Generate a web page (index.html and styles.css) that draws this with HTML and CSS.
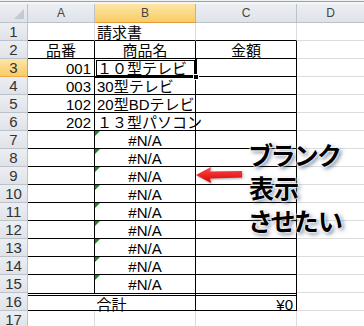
FILE: index.html
```html
<!DOCTYPE html>
<html lang="ja">
<head>
<meta charset="utf-8">
<title>請求書</title>
<link rel="stylesheet" href="styles.css">
</head>
<body>
<div class="band"></div>
<div class="sheet">
  <!-- column headers -->
  <div class="corner"></div>
  <div class="ch">A</div>
  <div class="ch sel">B</div>
  <div class="ch">C</div>
  <div class="ch">D</div>

  <!-- 1 -->
  <div class="rh">1</div>
  <div class="c top"></div>
  <div class="c top">請求書</div>
  <div class="c top"></div>
  <div class="c"></div>

  <!-- 2 -->
  <div class="rh">2</div>
  <div class="c t m">品番</div>
  <div class="c t m">商品名</div>
  <div class="c t m">金額</div>
  <div class="c"></div>

  <!-- 3 -->
  <div class="rh sel">3</div>
  <div class="c t r">001</div>
  <div class="c t active">１０型テレビ<span class="handle"></span></div>
  <div class="c t"></div>
  <div class="c"></div>

  <!-- 4 -->
  <div class="rh">4</div>
  <div class="c t r">003</div>
  <div class="c t">30型テレビ</div>
  <div class="c t"></div>
  <div class="c"></div>

  <!-- 5 -->
  <div class="rh">5</div>
  <div class="c t r">102</div>
  <div class="c t">20型BDテレビ</div>
  <div class="c t"></div>
  <div class="c"></div>

  <!-- 6 -->
  <div class="rh">6</div>
  <div class="c t r">202</div>
  <div class="c t">１３型パソコン</div>
  <div class="c t"></div>
  <div class="c"></div>

  <!-- 7 -->
  <div class="rh">7</div>
  <div class="c t"></div>
  <div class="c t m err">#N/A</div>
  <div class="c t"></div>
  <div class="c"></div>

  <!-- 8 -->
  <div class="rh">8</div>
  <div class="c t"></div>
  <div class="c t m err">#N/A</div>
  <div class="c t"></div>
  <div class="c"></div>

  <!-- 9 -->
  <div class="rh">9</div>
  <div class="c t"></div>
  <div class="c t m err">#N/A</div>
  <div class="c t"></div>
  <div class="c"></div>

  <!-- 10 -->
  <div class="rh">10</div>
  <div class="c t"></div>
  <div class="c t m err">#N/A</div>
  <div class="c t"></div>
  <div class="c"></div>

  <!-- 11 -->
  <div class="rh">11</div>
  <div class="c t"></div>
  <div class="c t m err">#N/A</div>
  <div class="c t"></div>
  <div class="c"></div>

  <!-- 12 -->
  <div class="rh">12</div>
  <div class="c t"></div>
  <div class="c t m err">#N/A</div>
  <div class="c t"></div>
  <div class="c"></div>

  <!-- 13 -->
  <div class="rh">13</div>
  <div class="c t"></div>
  <div class="c t m err">#N/A</div>
  <div class="c t"></div>
  <div class="c"></div>

  <!-- 14 -->
  <div class="rh">14</div>
  <div class="c t"></div>
  <div class="c t m err">#N/A</div>
  <div class="c t"></div>
  <div class="c"></div>

  <!-- 15: double line below -->
  <div class="rh">15</div>
  <div class="c t last"></div>
  <div class="c t m err last">#N/A</div>
  <div class="c t last"></div>
  <div class="c"></div>

  <!-- 16: total -->
  <div class="rh">16</div>
  <div class="c t tot m span2">合計</div>
  <div class="c t tot r">¥0</div>
  <div class="c"></div>

  <!-- 17 -->
  <div class="rh">17</div>
  <div class="c"></div>
  <div class="c"></div>
  <div class="c"></div>
  <div class="c"></div>
</div>

<svg class="arrow" width="50" height="20" viewBox="194 165 50 20">
  <defs>
    <linearGradient id="red" x1="0" y1="0" x2="0" y2="1">
      <stop offset="0" stop-color="#ff4b4b"/>
      <stop offset="1" stop-color="#d80000"/>
    </linearGradient>
  </defs>
  <path d="M196 175 L211 167 L210 171.5 L242 171 L242 177.5 L210 178.5 L211 183 Z" fill="url(#red)"/>
</svg>

<div class="note">ブランク<br>表示<br>させたい</div>
</body>
</html>
```

FILE: styles.css
```css
body {
    margin: 0;
    width: 364px;
    height: 326px;
    overflow: hidden;
    background: #fff;
    font-family: "Noto Sans CJK JP", sans-serif;
}
.band {
    height: 4px;
    background: linear-gradient(#eef0f3 0, #eef0f3 1px, #9aa3ae 1px, #9aa3ae 2px, #f4f5f7 2px);
}
.sheet {
    display: grid;
    grid-template-columns: 28px 67px 101px 101px 68px;
    grid-template-rows: 19px repeat(17, 18px);
    font-family: "Liberation Sans", "Noto Sans CJK JP", sans-serif;
    font-size: 15px;
    color: #000;
}
.sheet > div {
    box-sizing: border-box;
    white-space: nowrap;
}

/* headers */
.corner,
.ch,
.rh {
    background: linear-gradient(#eceef2, #dfe3e8);
    border-right: 1px solid #bcc2ca;
    border-bottom: 1px solid #bcc2ca;
    color: #444;
    text-align: center;
}
.corner {
    position: relative;
}
.corner::after {
    content: "";
    position: absolute;
    right: 3px;
    bottom: 3px;
    border-left: 10px solid transparent;
    border-bottom: 10px solid #c4c9d0;
}
.ch {
    font-size: 12px;
    line-height: 19px;
}
.rh {
    font-size: 15px;
    line-height: 18px;
    color: #333;
    overflow: hidden;
}
.ch.sel {
    background: linear-gradient(#fde6a8, #f7cc64);
    border-right-color: #f0a848;
    border-bottom: 1px solid #e89a3a;
}
.rh.sel {
    background: linear-gradient(#fde6a8, #f7cc64);
    border-right: 1px solid #e89a3a;
    border-bottom-color: #f0a848;
}

/* cells */
.c {
    border-right: 1px solid #dadcdd;
    border-bottom: 1px solid #dadcdd;
    padding: 0 2px;
    line-height: 20px;
    position: relative;
}
.top {
    border-bottom-color: #000;
}
.t {
    border-right-color: #000;
    border-bottom-color: #000;
}
.r {
    text-align: right;
    padding-right: 3px;
}
.m {
    text-align: center;
}
.last {
    border-bottom: 0;
}
.tot {
    border-top: 3px double #000;
    line-height: 17px;
}
.span2 {
    grid-column: span 2;
}

/* error marker */
.err::before {
    content: "";
    position: absolute;
    left: 0;
    top: 0;
    border-top: 5px solid #1a8a1a;
    border-right: 5px solid transparent;
}

/* active cell */
.active::after {
    content: "";
    position: absolute;
    top: -1px;
    left: -1px;
    right: -2px;
    bottom: -2px;
    border: 3px double #000;
}
.handle {
    position: absolute;
    right: -4px;
    bottom: -4px;
    width: 4px;
    height: 4px;
    background: #000;
    border: 1px solid #fff;
    z-index: 2;
}

/* callout */
.arrow {
    position: absolute;
    left: 194px;
    top: 165px;
    filter: drop-shadow(1px 1px 1px rgba(0, 0, 0, .35));
}
.note {
    position: absolute;
    left: 249px;
    top: 138px;
    font-size: 25px;
    font-weight: bold;
    line-height: 33px;
    font-feature-settings: "palt";
    color: #000;
    text-shadow: 0 0 1px #fff, 0 0 2px #fff, 0 0 2px #fff, 0 0 3px #fff,
        2px 2px 4px rgba(30, 50, 90, .7);
}
```
